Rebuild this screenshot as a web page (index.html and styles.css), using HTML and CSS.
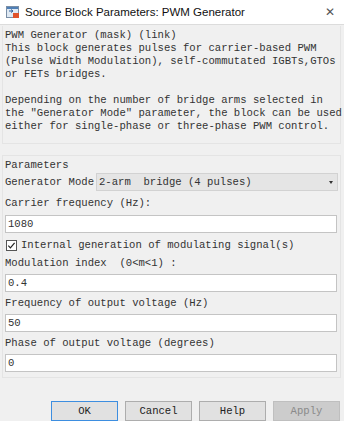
FILE: index.html
```html
<!DOCTYPE html>
<html>
  <head>
    <meta charset="utf-8">
    <title>Source Block Parameters: PWM Generator</title>
    <link rel="stylesheet" href="styles.css">
  </head>
<body>
  <div class="titlebar">
    <svg class="appicon" width="14" height="14" viewBox="0 0 14 14">
      <rect x="0.5" y="1.5" width="12" height="11" fill="#dfe9f3" stroke="#7a8ea6"/>
      <rect x="1" y="2" width="11" height="2" fill="#4f7fb6"/>
      <path d="M3 6 L7 6 M5 4.5 L7 6 L5 7.5" stroke="#2f5f9a" stroke-width="1" fill="none"/>
      <rect x="7" y="8" width="6" height="5" fill="#e0522a"/>
    </svg>
    <span class="title">Source Block Parameters: PWM Generator</span>
    <span class="close">&#x2715;</span>
  </div>

  <div class="group desc">
    <div class="legend">PWM Generator (mask) (link)</div>
    <div class="line">This block generates pulses for carrier-based PWM</div>
    <div class="line">(Pulse Width Modulation), self-commutated IGBTs,GTOs</div>
    <div class="line">or FETs bridges.</div>
    <div class="line">&nbsp;</div>
    <div class="line">Depending on the number of bridge arms selected in</div>
    <div class="line">the "Generator Mode" parameter, the block can be used</div>
    <div class="line">either for single-phase or three-phase PWM control.</div>
  </div>

  <div class="group params">
    <div class="legend">Parameters</div>
    <div class="moderow">
      <span class="lbl">Generator Mode</span>
      <div class="select">
        <span>2-arm&nbsp; bridge (4 pulses)</span>
        <span class="arrow"></span>
      </div>
    </div>
    <div class="lbl field first">Carrier frequency (Hz):</div>
    <div class="input">1080</div>
    <div class="checkrow">
      <svg class="check" width="11" height="11" viewBox="0 0 11 11">
        <rect x="0.5" y="0.5" width="10" height="10" fill="#fff" stroke="#555"/>
        <path d="M2.3 5.6 L4.4 7.8 L8.6 2.8" stroke="#222" stroke-width="1.2" fill="none"/>
      </svg>
      <span class="lbl">Internal generation of modulating signal(s)</span>
    </div>
    <div class="lbl field">Modulation index&nbsp; (0&lt;m&lt;1) :</div>
    <div class="input">0.4</div>
    <div class="lbl field">Frequency of output voltage (Hz)</div>
    <div class="input">50</div>
    <div class="lbl field">Phase of output voltage (degrees)</div>
    <div class="input">0</div>
  </div>

  <div class="buttons">
    <div class="btn default">OK</div>
    <div class="btn">Cancel</div>
    <div class="btn">Help</div>
    <div class="btn disabled">Apply</div>
  </div>
</body>
</html>
```

FILE: styles.css
```css
html
{
  background-color: #f0f0f0;
}
body
{
  width: 344px;
  height: 421px;
  margin: 0;
  padding: 0;
  overflow: hidden;
  background-color: #f0f0f0;
  font-family: "Liberation Mono", "DejaVu Sans Mono", monospace;
  font-size: 10.6px;
  color: #333333;
}
.titlebar
{
  display: flex;
  align-items: center;
  height: 25px;
  background-color: #ffffff;
  border-bottom: 1px solid #dcdcdc;
  box-sizing: border-box;
  padding: 0 0 0 6px;
  font-family: "Liberation Sans", Arial, sans-serif;
}
.appicon
{
  flex: none;
}
.title
{
  margin-left: 5px;
  font-size: 11.5px;
  color: #111;
  flex: 1;
}
.close
{
  width: 28px;
  text-align: center;
  font-size: 12px;
  color: #555;
}
.group
{
  margin: 1px 3px 0 2px;
  padding: 0 2px 0 2px;
  border: 1px solid #e4e4e4;
  border-top: none;
}
.line, .legend
{
  height: 13px;
  line-height: 13px;
  white-space: pre;
}
.desc
{
  padding-top: 3px;
  height: 114px;
}
.params
{
  margin-top: 11px;
  padding-top: 3px;
  height: 218px;
  border-top: 1px solid #e4e4e4;
}
.lbl
{
  line-height: 13px;
  white-space: pre;
}
.moderow
{
  display: flex;
  align-items: center;
  margin-top: 1px;
  height: 18px;
}
.select
{
  flex: 1;
  display: flex;
  align-items: center;
  justify-content: space-between;
  height: 18px;
  margin-left: 2px;
  padding: 0 4px 0 2px;
  box-sizing: border-box;
  background-color: #e5e5e5;
  border: 1px solid #d2d2d2;
}
.arrow
{
  width: 0;
  height: 0;
  border-left: 2px solid transparent;
  border-right: 2px solid transparent;
  border-top: 3px solid #333;
}
.field
{
  height: 13px;
  margin: 5px 0 4px 0;
}
.first
{
  margin: 6px 0 5px 0;
}
.input
{
  height: 18px;
  line-height: 16px;
  box-sizing: border-box;
  background-color: #ffffff;
  border: 1px solid #c4c4c4;
  padding: 0 2px;
  margin-right: 1px;
}
.checkrow
{
  display: flex;
  align-items: center;
  margin-top: 6px;
  height: 13px;
}
.check
{
  margin: 0 4px 0 1px;
}
.buttons
{
  display: flex;
  justify-content: flex-end;
  gap: 7px;
  margin-top: 23px;
  padding-right: 4px;
}
.btn
{
  width: 67px;
  height: 20px;
  line-height: 18px;
  text-align: center;
  box-sizing: border-box;
  background-color: #e1e1e1;
  border: 1px solid #adadad;
  color: #222;
}
.default
{
  border-color: #3d8ee0;
}
.disabled
{
  background-color: #cccccc;
  border-color: #bfbfbf;
  color: #8a8a8a;
}
```
